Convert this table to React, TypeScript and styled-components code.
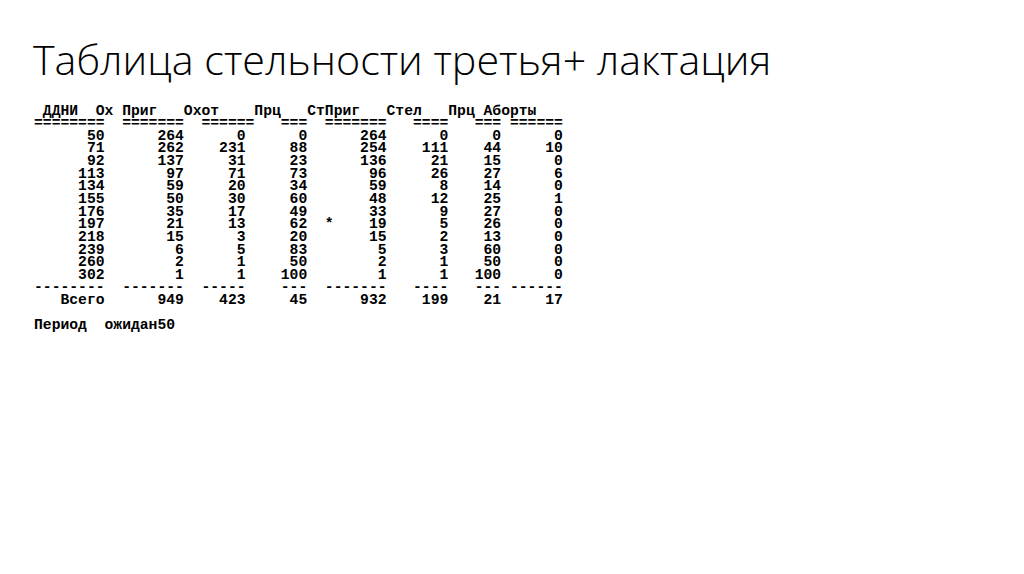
import React from 'react';
import styled, { createGlobalStyle } from 'styled-components';

const GlobalStyle = createGlobalStyle`
    html, body {
        margin: 0;
        padding: 0;
        background: #ffffff;
    }
`;

const Slide = styled.div`
    width: 1024px;
    height: 574px;
    box-sizing: border-box;
    padding: 35px 0 0 33px;
    background: #ffffff;
    color: #000000;
    overflow: hidden;
`;

const Title = styled.h1`
    margin: 0;
    font-family: 'Open Sans', 'Noto Sans', sans-serif;
    font-weight: 300;
    font-size: 41.2px;
    line-height: 48px;
    white-space: nowrap;
`;

const Report = styled.pre`
    margin: 21.5px 0 0 1px;
    font-family: 'Courier New', 'Liberation Mono', monospace;
    font-weight: bold;
    font-size: 14.7px;
    line-height: 12.64px;
`;

type Row = (string | number)[];

// last column of each right-aligned field
const FIELD_ENDS = [7, 16, 23, 30, 39, 46, 52, 59];

const rows: Row[] = [
    [50, 264, 0, 0, 264, 0, 0, 0],
    [71, 262, 231, 88, 254, 111, 44, 10],
    [92, 137, 31, 23, 136, 21, 15, 0],
    [113, 97, 71, 73, 96, 26, 27, 6],
    [134, 59, 20, 34, 59, 8, 14, 0],
    [155, 50, 30, 60, 48, 12, 25, 1],
    [176, 35, 17, 49, 33, 9, 27, 0],
    [197, 21, 13, 62, 19, 5, 26, 0],
    [218, 15, 3, 20, 15, 2, 13, 0],
    [239, 6, 5, 83, 5, 3, 60, 0],
    [260, 2, 1, 50, 2, 1, 50, 0],
    [302, 1, 1, 100, 1, 1, 100, 0],
];

const blank = () => Array.from({ length: 61 }, () => ' ');

const put = (line: string[], col: number, text: string) => {
    for (let i = 0; i < text.length; i++) line[col + i] = text[i];
};

const finish = (line: string[]) => line.join('').replace(/\s+$/, '');

const fieldLine = (values: Row, marks: [number, string][] = []) => {
    const line = blank();
    values.forEach((v, i) => {
        const s = String(v);
        put(line, FIELD_ENDS[i] - s.length + 1, s);
    });
    marks.forEach(([col, t]) => put(line, col, t));
    return finish(line);
};

const header = (() => {
    const line = blank();
    put(line, 1, 'ДДНИ');
    put(line, 7, 'Ох');
    put(line, 10, 'Приг');
    put(line, 17, 'Охот');
    put(line, 25, 'Прц');
    put(line, 31, 'СтПриг');
    put(line, 40, 'Стел');
    put(line, 47, 'Прц');
    put(line, 51, 'Аборты');
    return finish(line);
})();

// [start column, width] of each rule segment
const rule = (ch: string, segments: [number, number][]) => {
    const line = blank();
    segments.forEach(([start, w]) => put(line, start, ch.repeat(w)));
    return finish(line);
};

const lines = [
    header,
    rule('=', [[0, 8], [10, 7], [19, 6], [28, 3], [33, 7], [43, 4], [50, 3], [54, 6]]),
    ...rows.map((r) => fieldLine(r, r[0] === 197 ? [[33, '*']] : [])),
    rule('-', [[0, 8], [10, 7], [19, 5], [28, 3], [33, 7], [43, 4], [50, 3], [54, 6]]),
    fieldLine(['Всего', 949, 423, 45, 932, 199, 21, 17]),
    '',
    'Период  ожидан50',
];

export default function App() {
    return (
        <>
            <GlobalStyle />
            <Slide>
                <Title>Таблица стельности третья+ лактация</Title>
                <Report>{lines.join('\n')}</Report>
            </Slide>
        </>
    );
}
